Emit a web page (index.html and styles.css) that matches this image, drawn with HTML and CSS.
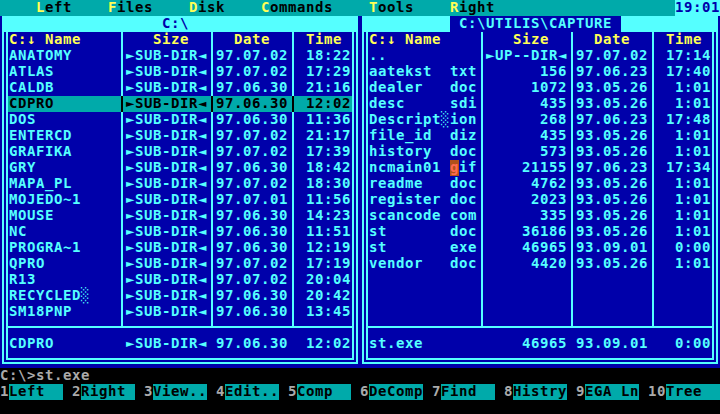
FILE: index.html
```html
<!DOCTYPE html>
<html>
<head>
<meta charset="utf-8">
<title>Norton Commander</title>
<link rel="stylesheet" href="styles.css">
</head>
<body>
<div class="screen">
  <div class="menubar">
    <div class="menu">    <span class="hk">L</span>eft    <span class="hk">F</span>iles    <span class="hk">D</span>isk    <span class="hk">C</span>ommands    <span class="hk">T</span>ools    <span class="hk">R</span>ight</div>
    <div class="clock">19:01</div>
  </div>
  <div class="panels">
    <section class="panel">
      <div class="ptitle"><span class="ttl left"> C:\ </span></div>
      <div class="pbody">
        <div class="list">
          <div class="row head"><span class="n">C:↓ Name</span><span class="s">Size</span><span>Date</span><span>Time</span></div>
          <div class="row"><span>ANATOMY</span><span>►SUB-DIR◄</span><span>97.07.02</span><span class="r">18:22</span></div>
          <div class="row"><span>ATLAS</span><span>►SUB-DIR◄</span><span>97.07.02</span><span class="r">17:29</span></div>
          <div class="row"><span>CALDB</span><span>►SUB-DIR◄</span><span>97.06.30</span><span class="r">21:16</span></div>
          <div class="row cur"><span>CDPRO</span><span>►SUB-DIR◄</span><span>97.06.30</span><span class="r">12:02</span></div>
          <div class="row"><span>DOS</span><span>►SUB-DIR◄</span><span>97.06.30</span><span class="r">11:36</span></div>
          <div class="row"><span>ENTERCD</span><span>►SUB-DIR◄</span><span>97.07.02</span><span class="r">21:17</span></div>
          <div class="row"><span>GRAFIKA</span><span>►SUB-DIR◄</span><span>97.07.02</span><span class="r">17:39</span></div>
          <div class="row"><span>GRY</span><span>►SUB-DIR◄</span><span>97.06.30</span><span class="r">18:42</span></div>
          <div class="row"><span>MAPA_PL</span><span>►SUB-DIR◄</span><span>97.07.02</span><span class="r">18:30</span></div>
          <div class="row"><span>MOJEDO~1</span><span>►SUB-DIR◄</span><span>97.07.01</span><span class="r">11:56</span></div>
          <div class="row"><span>MOUSE</span><span>►SUB-DIR◄</span><span>97.06.30</span><span class="r">14:23</span></div>
          <div class="row"><span>NC</span><span>►SUB-DIR◄</span><span>97.06.30</span><span class="r">11:51</span></div>
          <div class="row"><span>PROGRA~1</span><span>►SUB-DIR◄</span><span>97.06.30</span><span class="r">12:19</span></div>
          <div class="row"><span>QPRO</span><span>►SUB-DIR◄</span><span>97.07.02</span><span class="r">17:19</span></div>
          <div class="row"><span>R13</span><span>►SUB-DIR◄</span><span>97.07.02</span><span class="r">20:04</span></div>
          <div class="row"><span>RECYCLED░</span><span>►SUB-DIR◄</span><span>97.06.30</span><span class="r">20:42</span></div>
          <div class="row"><span>SM18PNP</span><span>►SUB-DIR◄</span><span>97.06.30</span><span class="r">13:45</span></div>
        </div>
        <div class="hsep"></div>
        <div class="row status"><span>CDPRO</span><span>►SUB-DIR◄</span><span>97.06.30</span><span class="r">12:02</span></div>
      </div>
    </section>
    <section class="panel">
      <div class="ptitle"><span class="ttl active"> C:\UTILIS\CAPTURE </span></div>
      <div class="pbody">
        <div class="list">
          <div class="row head"><span class="n">C:↓ Name</span><span class="s">Size</span><span>Date</span><span>Time</span></div>
          <div class="row"><span>..</span><span>►UP--DIR◄</span><span>97.07.02</span><span class="r">17:14</span></div>
          <div class="row"><span>aatekst  txt</span><span class="r">156</span><span>97.06.23</span><span class="r">17:40</span></div>
          <div class="row"><span>dealer   doc</span><span class="r">1072</span><span>93.05.26</span><span class="r">1:01</span></div>
          <div class="row"><span>desc     sdi</span><span class="r">435</span><span>93.05.26</span><span class="r">1:01</span></div>
          <div class="row"><span>Descript░ion</span><span class="r">268</span><span>97.06.23</span><span class="r">17:48</span></div>
          <div class="row"><span>file_id  diz</span><span class="r">435</span><span>93.05.26</span><span class="r">1:01</span></div>
          <div class="row"><span>history  doc</span><span class="r">573</span><span>93.05.26</span><span class="r">1:01</span></div>
          <div class="row"><span>ncmain01 <span class="mouse">g</span>if</span><span class="r">21155</span><span>97.06.23</span><span class="r">17:34</span></div>
          <div class="row"><span>readme   doc</span><span class="r">4762</span><span>93.05.26</span><span class="r">1:01</span></div>
          <div class="row"><span>register doc</span><span class="r">2023</span><span>93.05.26</span><span class="r">1:01</span></div>
          <div class="row"><span>scancode com</span><span class="r">335</span><span>93.05.26</span><span class="r">1:01</span></div>
          <div class="row"><span>st       doc</span><span class="r">36186</span><span>93.05.26</span><span class="r">1:01</span></div>
          <div class="row"><span>st       exe</span><span class="r">46965</span><span>93.09.01</span><span class="r">0:00</span></div>
          <div class="row"><span>vendor   doc</span><span class="r">4420</span><span>93.05.26</span><span class="r">1:01</span></div>
        </div>
        <div class="hsep"></div>
        <div class="row status"><span>st.exe</span><span class="r">46965</span><span>93.09.01</span><span class="r">0:00</span></div>
      </div>
    </section>
  </div>
  <div class="prompt">C:\&gt;st.exe</div>
  <div class="fkeys">
    <div class="key"><span class="num">1</span><span class="lab">Left</span></div>
    <div class="key"><span class="num">2</span><span class="lab">Right</span></div>
    <div class="key"><span class="num">3</span><span class="lab">View..</span></div>
    <div class="key"><span class="num">4</span><span class="lab">Edit..</span></div>
    <div class="key"><span class="num">5</span><span class="lab">Comp</span></div>
    <div class="key"><span class="num">6</span><span class="lab">DeComp</span></div>
    <div class="key"><span class="num">7</span><span class="lab">Find</span></div>
    <div class="key"><span class="num">8</span><span class="lab">Histry</span></div>
    <div class="key"><span class="num">9</span><span class="lab">EGA Ln</span></div>
    <div class="key"><span class="num">10</span><span class="lab">Tree</span></div>
  </div>
</div>
</body>
</html>
```
FILE: styles.css
```css
* { box-sizing: border-box; margin: 0; padding: 0; }

body {
  margin: 0;
  width: 720px;
  height: 414px;
  overflow: hidden;
  background: #000;
  color: #55ffff;
  font-family: "DejaVu Sans Mono", "Liberation Mono", monospace;
  font-weight: bold;
  font-size: 14px;
  letter-spacing: 0.57px;
  line-height: 14px;
}

.screen {
  display: flex;
  flex-direction: column;
  width: 720px;
}

/* top menu */
.menubar {
  display: flex;
  height: 16px;
}
.menu {
  flex: 1;
  background: #00aaaa;
  color: #000;
  white-space: pre;
}
.hk { color: #ffff55; }
.clock {
  width: 45px;
  background: #55ffff;
  color: #0000aa;
  white-space: pre;
}

/* panels */
.panels {
  display: flex;
  height: 352px;
}
.panel {
  width: 360px;
  display: flex;
  flex-direction: column;
  background: #0000aa;
}
.ptitle {
  display: flex;
  height: 16px;
  margin: 0 2px;
  background: #55ffff;
}
.ttl {
  white-space: pre;
  color: #0000aa;
}
.ttl.left { margin-left: 151px; }
.ttl.active {
  margin-left: 88px;
  background: #0000aa;
  color: #55ffff;
}

.pbody {
  flex: 1;
  margin: 0 2px 4px;
  border: 6px double #55ffff;
  border-top: none;
  padding-bottom: 6px;
}

.list {
  height: 288px;
  background: linear-gradient(to right,
    transparent 113px, #55ffff 113px, #55ffff 115px, transparent 115px,
    transparent 203px, #55ffff 203px, #55ffff 205px, transparent 205px,
    transparent 284px, #55ffff 284px, #55ffff 286px, transparent 286px);
}

.row {
  display: grid;
  grid-template-columns: 108px 81px 72px 54px;
  column-gap: 9px;
  padding: 0 1px;
  height: 16px;
  line-height: 14px;
  white-space: pre;
}
.r { text-align: right; }

.head {
  color: #ffff55;
  text-align: center;
}
.head .n { text-align: left; }
.head .s { padding-left: 9px; }

.cur {
  color: #000;
  background:
    linear-gradient(to right,
      transparent 113px, #000 113px, #000 115px, transparent 115px,
      transparent 203px, #000 203px, #000 205px, transparent 205px,
      transparent 284px, #000 284px, #000 286px, transparent 286px),
    #00aaaa;
}

.mouse {
  display: inline-block;
  height: 16px;
  vertical-align: top;
  background: #b0501a;
  color: #ff6a50;
}

.hsep {
  height: 16px;
  background:
    linear-gradient(to bottom, transparent 6px, #55ffff 6px, #55ffff 8px, transparent 8px),
    linear-gradient(to right,
      transparent 113px, #55ffff 113px, #55ffff 115px, transparent 115px,
      transparent 203px, #55ffff 203px, #55ffff 205px, transparent 205px,
      transparent 284px, #55ffff 284px, #55ffff 286px, transparent 286px) top left / 100% 7px no-repeat;
}

/* command line + function keys */
.prompt {
  height: 16px;
  color: #aaaaaa;
  white-space: pre;
}
.fkeys {
  display: flex;
  gap: 9px;
  height: 16px;
}
.key { display: flex; }
.num { color: #aaaaaa; }
.lab {
  width: 54px;
  background: #00aaaa;
  color: #000;
  white-space: pre;
}
```
